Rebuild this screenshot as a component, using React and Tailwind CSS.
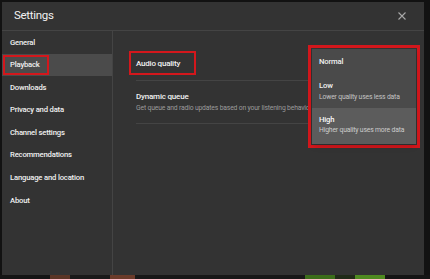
import React from 'react';

const navItems = [
  'General',
  'Playback',
  'Downloads',
  'Privacy and data',
  'Channel settings',
  'Recommendations',
  'Language and location',
  'About',
];

function CloseIcon() {
  return (
    <svg width="8" height="8" viewBox="0 0 8 8" className="text-[#a8a8a8]">
      <path d="M0.5 0.5 L7.5 7.5 M7.5 0.5 L0.5 7.5" stroke="currentColor" strokeWidth="1.1" />
    </svg>
  );
}

export default function App() {
  const active = 'Playback';

  return (
    <div
      className="relative w-[430px] h-[279px] overflow-hidden bg-[#121212] pt-[2px] pl-[2px]"
      style={{ fontFamily: 'Roboto, "Liberation Sans", sans-serif' }}
    >
      {/* Dialog */}
      <div className="w-[422px] h-[273px] bg-[#333333] flex flex-col">
        {/* Header */}
        <div className="h-[29px] shrink-0 flex items-center justify-between pl-[12px] pr-[18px] border-b border-[#444444]">
          <h1 className="text-[11.5px] tracking-tight text-[#f1f1f1]">Settings</h1>
          <CloseIcon />
        </div>

        <div className="flex flex-1 min-h-0">
          {/* Sidebar */}
          <nav className="w-[111px] shrink-0 border-r border-[#444444] flex flex-col">
            {navItems.map((label) => {
              const isActive = label === active;
              return (
                <div
                  key={label}
                  className={`relative h-[22.6px] flex items-center pl-[8px] text-[7.7px] font-medium tracking-tight text-[#f0f0f0] ${
                    isActive ? 'bg-[#4b4b4b]' : ''
                  }`}
                >
                  {isActive && (
                    <span className="absolute left-[1px] top-[1px] bottom-[1px] w-[46px] border-2 border-[#d3171c]" />
                  )}
                  <span className="relative">{label}</span>
                </div>
              );
            })}
          </nav>

          {/* Content */}
          <div className="flex-1 pt-[13px] pl-[23px] pr-[20px]">
            <div className="h-[37px] flex items-center border-b border-[#444444]">
              <div className="relative leading-[12px]">
                <span className="absolute -left-[7px] -right-[16px] -top-[4px] -bottom-[5px] border-2 border-[#d3171c]" />
                <span className="text-[8px] font-medium tracking-tight text-[#f1f1f1]">Audio quality</span>
              </div>
            </div>
            <div className="h-[43px] flex flex-col justify-center gap-[1px] border-b border-[#444444]">
              <span className="text-[8px] leading-[10px] font-medium tracking-tight text-[#f1f1f1]">Dynamic queue</span>
              <span className="text-[6.8px] leading-[10px] tracking-tight text-[#9b9b9b] whitespace-nowrap">
                Get queue and radio updates based on your listening behavior
              </span>
            </div>
          </div>
        </div>
      </div>

      {/* Background peeking below the dialog */}
      <div className="absolute left-0 right-0 bottom-0 h-[4px] flex">
        <div className="w-[50px] bg-[#151515]" />
        <div className="w-[20px] bg-[#5a3526]" />
        <div className="w-[40px] bg-[#1a1a1a]" />
        <div className="w-[25px] bg-[#6b3b2a]" />
        <div className="w-[170px] bg-[#181818]" />
        <div className="w-[30px] bg-[#3c6d1a]" />
        <div className="w-[20px] bg-[#202a18]" />
        <div className="w-[30px] bg-[#4f8a20]" />
        <div className="flex-1 bg-[#151515]" />
      </div>

      {/* Dropdown menu */}
      <div className="absolute left-[308px] top-[45px] w-[112px] h-[103px] border-[3px] border-[#d3171c] bg-[#333333] p-[1px]">
        <div className="h-full bg-[#4a4a4a] flex flex-col shadow-md">
          <div className="h-[26px] flex items-center pl-[7px] text-[7.7px] font-medium tracking-tight text-[#f1f1f1]">
            Normal
          </div>
          <div className="h-[33px] flex flex-col justify-center gap-[1px] pl-[7px]">
            <span className="text-[7.7px] leading-[10px] font-medium tracking-tight text-[#f1f1f1]">Low</span>
            <span className="text-[6.8px] leading-[10px] tracking-tight text-[#c4c4c4] whitespace-nowrap">Lower quality uses less data</span>
          </div>
          <div className="flex-1 bg-[#5c5c5c] flex flex-col justify-center gap-[0px] pl-[7px] pb-[3px]">
            <span className="text-[7.7px] leading-[10px] font-medium tracking-tight text-[#f8f8f8]">High</span>
            <span className="text-[6.8px] leading-[10px] tracking-tight text-[#cccccc] whitespace-nowrap">Higher quality uses more data</span>
          </div>
        </div>
      </div>
    </div>
  );
}
